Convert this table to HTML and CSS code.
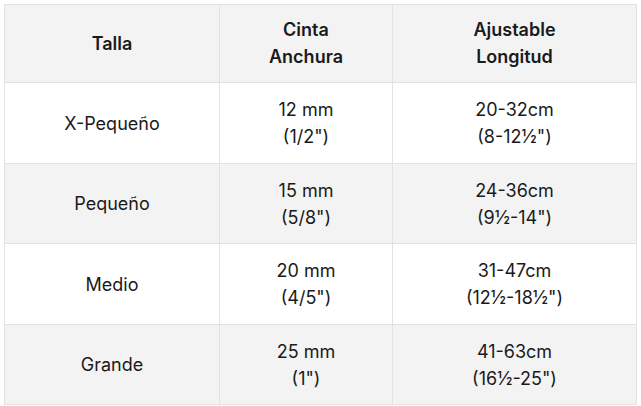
FILE: index.html
```html
<!DOCTYPE html>
<html lang="es">
<head>
<meta charset="utf-8">
<link rel="stylesheet" href="styles.css">
</head>
<body>
<table class="size-table">
  <colgroup>
    <col class="c1"><col class="c2"><col class="c3">
  </colgroup>
  <thead>
    <tr>
      <th>Talla</th>
      <th>Cinta<br>Anchura</th>
      <th>Ajustable<br>Longitud</th>
    </tr>
  </thead>
  <tbody>
    <tr>
      <td>X-Pequeño</td>
      <td>12 mm<br>(1/2")</td>
      <td>20-32cm<br>(8-12½")</td>
    </tr>
    <tr>
      <td>Pequeño</td>
      <td>15 mm<br>(5/8")</td>
      <td>24-36cm<br>(9½-14")</td>
    </tr>
    <tr>
      <td>Medio</td>
      <td>20 mm<br>(4/5")</td>
      <td>31-47cm<br>(12½-18½")</td>
    </tr>
    <tr>
      <td>Grande</td>
      <td>25 mm<br>(1")</td>
      <td>41-63cm<br>(16½-25")</td>
    </tr>
  </tbody>
</table>
</body>
</html>
```
FILE: styles.css
```css
html, body {
  margin: 0;
  padding: 0;
  background: #ffffff;
}
body {
  padding: 4px 5px 0 4px;
  font-family: Inter, "Noto Sans", sans-serif;
  color: #1a1a1a;
}
.size-table {
  border-collapse: collapse;
  width: 632px;
  table-layout: fixed;
  font-size: 18px;
  line-height: 27px;
}
.c1 { width: 215px; }
.c2 { width: 173px; }
.c3 { width: 244px; }
.size-table th,
.size-table td {
  border: 1px solid #e2e2e2;
  text-align: center;
  vertical-align: middle;
  padding: 13px 4px 12.5px;
}
.size-table th {
  background: #f3f3f3;
  font-weight: 600;
  padding: 11px 4px 12px;
}
.size-table td {
  font-weight: 400;
}
.size-table tbody tr:nth-child(even) td {
  background: #f3f3f3;
}
```
